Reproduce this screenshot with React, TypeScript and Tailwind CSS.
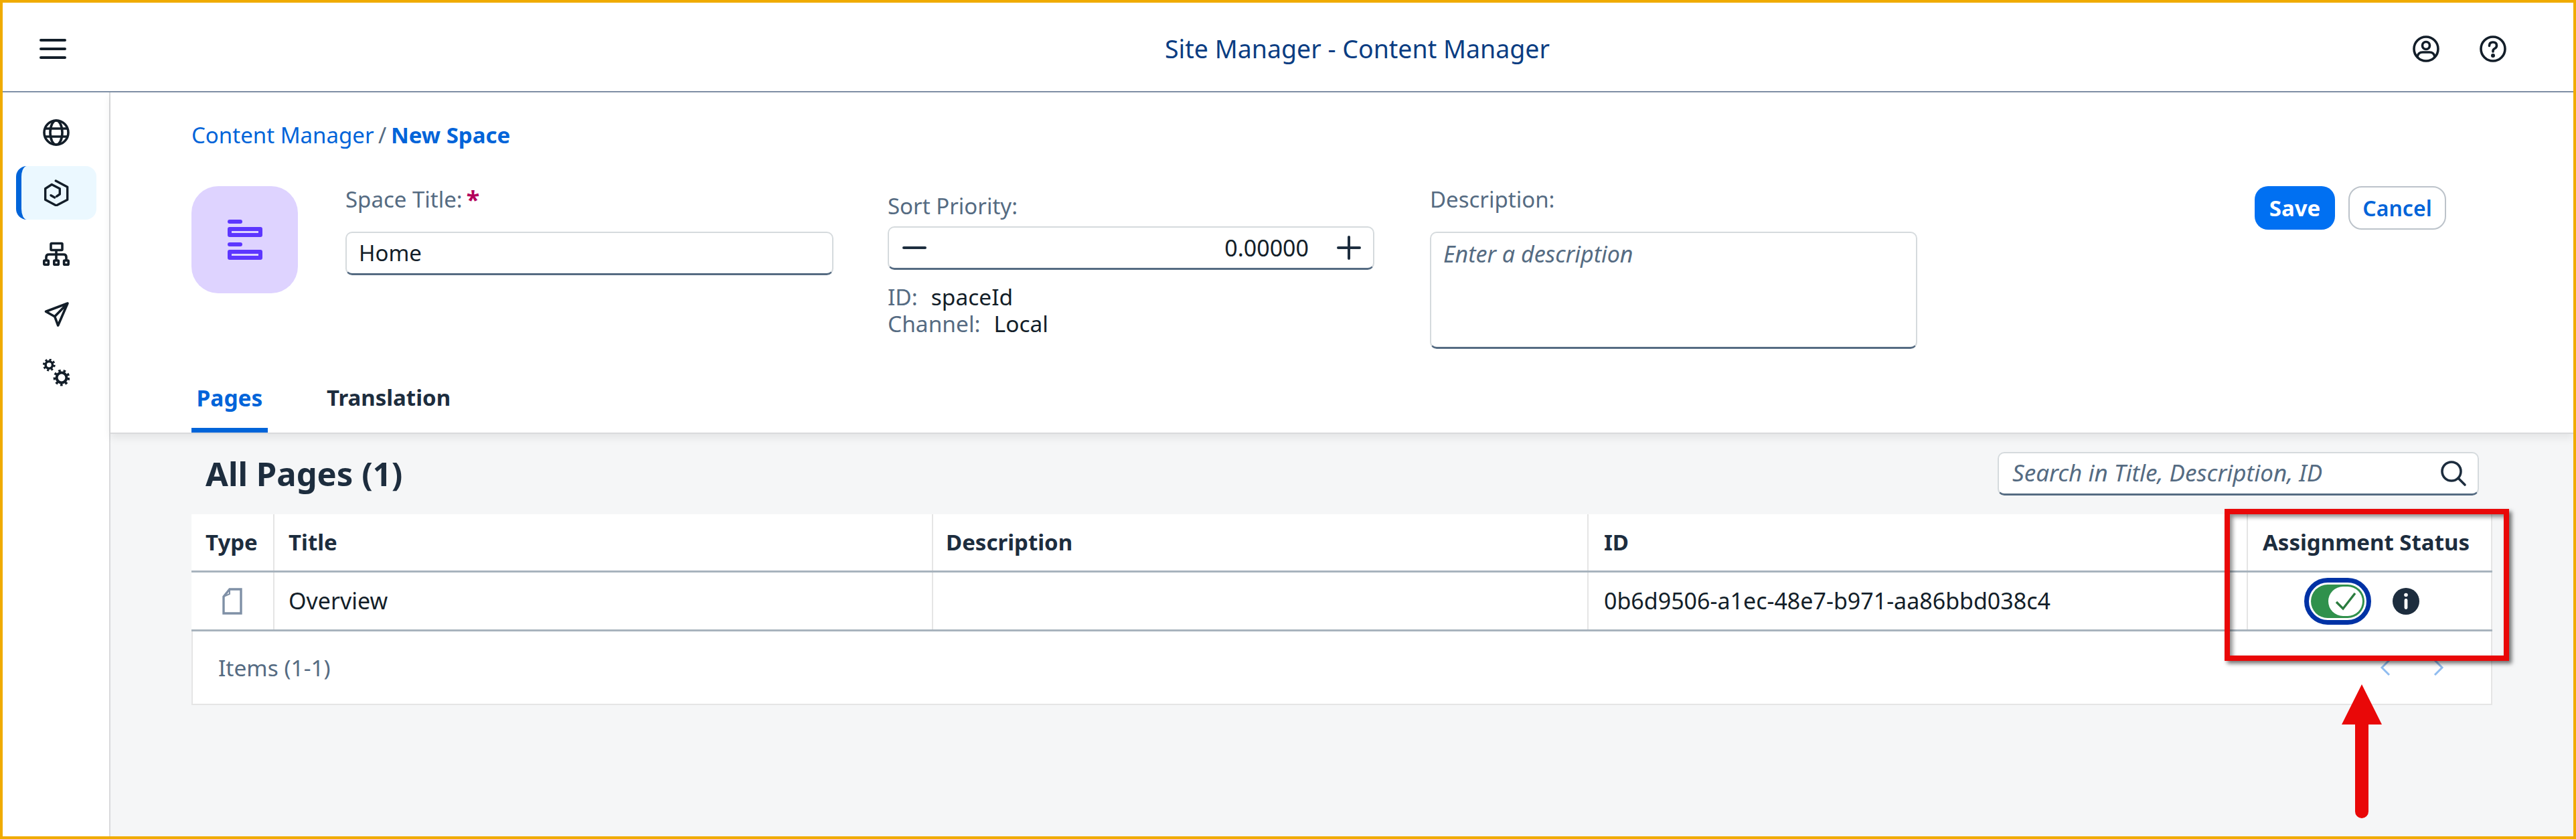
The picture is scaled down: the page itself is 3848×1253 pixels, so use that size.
import React from "react";

const F = { fontFamily: '"Noto Sans", Arial, sans-serif' };

function Globe() {
  return (
    <svg width="40" height="40" viewBox="0 0 40 40" fill="none" stroke="#131e29" strokeWidth="3.6">
      <circle cx="20" cy="20" r="18" />
      <ellipse cx="20" cy="20" rx="9" ry="18" />
      <path d="M3 14h34M3 26h34" />
    </svg>
  );
}
function Hex() {
  return (
    <svg width="40" height="40" viewBox="0 0 40 40" fill="none" stroke="#131e29" strokeWidth="3.4" strokeLinecap="round" strokeLinejoin="round">
      <path d="M19.3 2 36.7 11.3V30.3L20 39 3.7 30.3V13.7L13.3 7.5 25.3 13.7V22L20.5 25.3" />
      <path d="M12 23.7 17.7 27" />
    </svg>
  );
}
function SiteMap() {
  return (
    <svg width="40" height="36" viewBox="0 0 40 36" fill="none" stroke="#131e29" strokeWidth="3.6" strokeLinejoin="round">
      <rect x="12" y="2.5" width="17" height="10" rx="1" />
      <path d="M20 13v14M5 27v-4q0-4 4-4h22q4 0 4 4v4" />
      <rect x="1.8" y="28" width="6.6" height="6.2" rx="1" />
      <rect x="16.8" y="28" width="6.6" height="6.2" rx="1" />
      <rect x="31.6" y="28" width="6.6" height="6.2" rx="1" />
    </svg>
  );
}
function Send() {
  return (
    <svg width="40" height="40" viewBox="0 0 40 40" fill="none" stroke="#131e29" strokeWidth="3.6" strokeLinejoin="round">
      <path d="M37 3 4.5 15.3 17.7 22.7 22.7 36ZM37 3 17.7 22.7" />
    </svg>
  );
}
function Gears() {
  return (
    <svg width="40" height="42" viewBox="0 0 40 42" fill="none" stroke="#131e29">
      <circle cx="9.3" cy="9" r="5.2" strokeWidth="3.6" />
      <circle cx="9.3" cy="9" r="7.8" strokeWidth="3.2" strokeDasharray="3 3.13" />
      <circle cx="28" cy="28" r="7.4" strokeWidth="4" />
      <circle cx="28" cy="28" r="10.6" strokeWidth="3.6" strokeDasharray="3.6 3.86" />
    </svg>
  );
}
function UserIcon() {
  return (
    <svg width="40" height="40" viewBox="0 0 40 40" fill="none" stroke="#131e29" strokeWidth="3.6">
      <circle cx="20" cy="20" r="18" />
      <circle cx="20" cy="15" r="5.5" />
      <path d="M7 32q1-7 8-7h10q7 0 8 7" />
    </svg>
  );
}
function Help() {
  return (
    <svg width="40" height="40" viewBox="0 0 40 40" fill="none" stroke="#131e29" strokeWidth="3.6" strokeLinecap="round">
      <circle cx="20" cy="20" r="18" />
      <path d="M14.5 15.5q0-5.5 5.5-5.5t5.5 5q0 3-3 4.5t-2.5 4.5" />
      <circle cx="20" cy="30" r="1.2" fill="#131e29" />
    </svg>
  );
}

const cols = ["w-[124px]", "w-[984px]", "w-[979px]", "w-[985px]", "w-[365px]"];

export default function App() {
  return (
    <div style={F} className="w-[3848px] h-[1253px] relative border-4 border-[#f0ab00] bg-white overflow-hidden flex flex-col text-[#131e29]">
      <header className="h-[134px] shrink-0 border-b-2 border-[#7f90a6] flex items-center bg-white relative pt-[6px]">
        <div className="w-[161px] flex justify-center pr-[12px]">
          <svg width="42" height="34" viewBox="0 0 42 34" fill="#131e29">
            <rect x="1" y="2" width="40" height="4" rx="2" />
            <rect x="1" y="15" width="40" height="4" rx="2" />
            <rect x="1" y="28" width="40" height="4" rx="2" />
          </svg>
        </div>
        <div className="flex-1 flex justify-center text-[37.5px] text-[#0a3d82] pl-[286px]">Site Manager - Content Manager</div>
        <div className="flex gap-[60px] pr-[100px]">
          <UserIcon />
          <Help />
        </div>
      </header>

      <div className="flex-1 flex min-h-0">
        <aside className="w-[161px] shrink-0 border-r-2 border-[#d9dadc] bg-white flex flex-col items-start pl-[20px] pt-[20px]">
          <div className="w-[120px] h-[80px] flex items-center justify-center"><Globe /></div>
          <div className="w-[120px] h-[80px] mt-[10px] flex items-center justify-center bg-[#ebf8ff] rounded-[16px] border-l-[8px] border-[#0064d9] pr-[8px]"><Hex /></div>
          <div className="w-[120px] h-[36px] mt-[33px] flex items-center justify-center"><SiteMap /></div>
          <div className="w-[120px] h-[40px] mt-[53px] flex items-center justify-center"><Send /></div>
          <div className="w-[120px] h-[42px] mt-[46px] flex items-center justify-center"><Gears /></div>
        </aside>

        <main className="flex-1 flex flex-col bg-[#f5f6f7] min-w-0">
          <section className="h-[510px] shrink-0 bg-white border-b-2 border-[#d9dadc] shadow-[0_6px_12px_rgba(0,0,0,0.07)] pl-[121px] pt-[42px] relative flex flex-col">
            <div className="text-[33px] leading-[44px] text-[#0064d9]">
              Content Manager <span className="text-[#556b82] -ml-[2px] -mr-[2px]">/</span> <span className="font-bold">New Space</span>
            </div>
            <div className="flex items-start mt-[54px]">
              <div className="w-[159px] h-[160px] rounded-[40px] bg-[#ded3ff] flex items-center justify-center shrink-0">
                <svg width="52" height="60" viewBox="0 0 52 60" fill="#5d36ff">
                  <rect x="0" y="0" width="22" height="6" rx="3" />
                  <rect x="3" y="14" width="46" height="9" rx="0" fill="none" stroke="#5d36ff" strokeWidth="6" strokeLinejoin="round" />
                  <rect x="0" y="34" width="22" height="6" rx="3" />
                  <rect x="3" y="48" width="46" height="9" rx="0" fill="none" stroke="#5d36ff" strokeWidth="6" strokeLinejoin="round" />
                </svg>
              </div>
              <div className="w-[729px] ml-[71px] shrink-0">
                <div className="text-[33px] leading-[40px] text-[#556b82] flex items-center">
                  Space Title:<span className="ml-[6px] font-bold text-[36px] leading-[32px] text-[#b3005b]">*</span>
                </div>
                <div className="mt-[28px] h-[65px] rounded-[10px] border-2 border-[#d5dadd] border-b-[3px] border-b-[#556b82] flex items-center pl-[18px] text-[33px] bg-white">Home</div>
              </div>
              <div className="w-[727px] ml-[81px] shrink-0 pt-[10px]">
                <div className="text-[33px] leading-[40px] text-[#556b82]">Sort Priority:</div>
                <div className="mt-[10px] h-[65px] rounded-[10px] border-2 border-[#d5dadd] border-b-[3px] border-b-[#556b82] flex items-center pl-[20px] pr-[18px] bg-white">
                  <div className="w-[36px] h-[4px] rounded-[2px] bg-[#1d2d3e]" />
                  <div className="flex-1 text-right text-[34px] pr-[42px]">0.00000</div>
                  <svg width="36" height="36" viewBox="0 0 36 36" fill="#1d2d3e">
                    <rect x="0" y="16" width="36" height="4" rx="2" />
                    <rect x="16" y="0" width="4" height="36" rx="2" />
                  </svg>
                </div>
                <div className="mt-[20px] text-[33.5px] leading-[40px]">
                  <div><span className="text-[#556b82]">ID:</span><span className="ml-[20px]">spaceId</span></div>
                  <div><span className="text-[#556b82]">Channel:</span><span className="ml-[20px]">Local</span></div>
                </div>
              </div>
              <div className="w-[728px] ml-[83px] shrink-0">
                <div className="text-[33px] leading-[40px] text-[#556b82]">Description:</div>
                <div className="mt-[28px] h-[175px] rounded-[10px] border-2 border-[#d5dadd] border-b-[3px] border-b-[#556b82] pl-[18px] pt-[6px] text-[34px] italic text-[#556b82] bg-white">Enter a description</div>
              </div>
              <div className="flex ml-[504px] gap-[20px] shrink-0">
                <div className="w-[120px] h-[65px] rounded-[20px] bg-[#0070f2] text-white font-bold text-[33px] flex items-center justify-center">Save</div>
                <div className="w-[146px] h-[65px] rounded-[20px] bg-white border-2 border-[#bcc3ca] text-[#0064d9] font-semibold text-[32px] flex items-center justify-center">Cancel</div>
              </div>
            </div>
            <div className="absolute left-[121px] bottom-0 flex h-[96px]">
              <div className="w-[114px] relative flex justify-center pt-[14px] text-[#0064d9] font-bold text-[33.5px] leading-[60px] h-[96px] border-b-[7px] border-[#0064d9]">Pages</div>
              <div className="ml-[88px] pt-[14px] font-bold text-[33px] leading-[60px] text-[#1d2d3e]">Translation</div>
            </div>
          </section>

          <section className="pl-[121px] pr-[121px] flex-1 min-h-0">
            <div className="flex items-center h-[120px] pl-[21px] pr-[20px] justify-between">
              <h2 className="text-[49px] font-bold text-[#1d2d3e]">All Pages (1)</h2>
              <div className="w-[719px] h-[65px] rounded-[10px] border-2 border-[#d5dadd] border-b-[3px] border-b-[#556b82] bg-white flex items-center justify-between pl-[20px] pr-[16px] italic text-[35px] text-[#556b82] -mt-[2px]">
                Search in Title, Description, ID
                <svg width="40" height="40" viewBox="0 0 40 40" fill="none" stroke="#1d2d3e" strokeWidth="3.6" strokeLinecap="round">
                  <circle cx="17" cy="17" r="14" />
                  <path d="M27 27 37 37" />
                </svg>
              </div>
            </div>
            <div className="w-[3437px] bg-white">
              <div className="flex h-[87px] border-b-[3px] border-[#a8b3bd] font-bold text-[33px] text-[#1d2d3e]">
                {["Type", "Title", "Description", "ID"].map((t, i) => (
                  <div key={t} className={cols[i] + " h-full border-r-2 border-[#e5e5e5] flex items-center " + (i === 3 ? "pl-[23px]" : i === 2 ? "pl-[19px]" : "pl-[21px]")}>{t}</div>
                ))}
                <div className={cols[4] + " h-full flex items-center justify-center border-r-2 border-[#e5e5e5] pr-[10px]"}>Assignment Status</div>
              </div>
              <div className="flex h-[88px] border-b-[3px] border-[#a8b3bd] text-[34px]">
                <div className={cols[0] + " h-full border-r-2 border-[#e5e5e5] flex items-center justify-center"}>
                  <svg width="30" height="40" viewBox="0 0 30 40" fill="none" stroke="#7f90a6" strokeWidth="3.4">
                    <path d="M11 2H28V38H2V13Z" />
                    <path d="M2 13 11 9V2" strokeWidth="2" />
                  </svg>
                </div>
                <div className={cols[1] + " h-full border-r-2 border-[#e5e5e5] flex items-center pl-[21px]"}>Overview</div>
                <div className={cols[2] + " h-full border-r-2 border-[#e5e5e5]"} />
                <div className={cols[3] + " h-full border-r-2 border-[#e5e5e5] flex items-center pl-[23px]"}>0b6d9506-a1ec-48e7-b971-aa86bbd038c4</div>
                <div className={cols[4] + " h-full border-r-2 border-[#e5e5e5] flex items-center pl-[84px] gap-[32px]"}>
                  <div className="w-[100px] h-[70px] rounded-[35px] border-[7px] border-[#0032a5] bg-white flex items-center justify-center">
                    <div className="w-[80px] h-[50px] rounded-[25px] bg-[#30914c] flex items-center justify-end pr-[3px]">
                      <div className="w-[51px] h-[44px] rounded-[22px] bg-white flex items-center justify-center">
                        <svg width="32" height="28" viewBox="0 0 32 28" fill="none" stroke="#2b7c3f" strokeWidth="3.4">
                          <path d="M2 15 12 25 30 2" />
                        </svg>
                      </div>
                    </div>
                  </div>
                  <svg width="40" height="40" viewBox="0 0 40 40">
                    <circle cx="20" cy="20" r="20" fill="#1d2d3e" />
                    <circle cx="20" cy="10.5" r="2.8" fill="#fff" />
                    <rect x="17.6" y="16" width="4.8" height="16" rx="2.4" fill="#fff" />
                  </svg>
                </div>
              </div>
              <div className="h-[110px] border-2 border-t-0 border-[#e5e5e5] flex items-center justify-between pl-[38px] pr-[70px] text-[33.5px] text-[#556b82]">
                Items (1-1)
                <div className="flex gap-[64px]">
                  <svg width="16" height="26" viewBox="0 0 16 26" fill="none" stroke="#8fbcf0" strokeWidth="3"><path d="M14 2 3 13l11 11" /></svg>
                  <svg width="16" height="26" viewBox="0 0 16 26" fill="none" stroke="#8fbcf0" strokeWidth="3"><path d="M2 2l11 11L2 24" /></svg>
                </div>
              </div>
            </div>
          </section>
        </main>
      </div>

      {/* Annotation overlays */}
      <div className="absolute left-[3319px] top-[756px] w-[425px] h-[227px] border-[8px] border-[#e90808] shadow-[4px_4px_6px_rgba(0,0,0,0.55),inset_4px_4px_6px_rgba(0,0,0,0.45)]" />
      <svg className="absolute left-[3494px] top-[1018px]" width="60" height="200" viewBox="0 0 60 200">
        <path d="M30 0 60 60H40V190a10 10 0 0 1-20 0V60H0Z" fill="#e90808" />
      </svg>
    </div>
  );
}
